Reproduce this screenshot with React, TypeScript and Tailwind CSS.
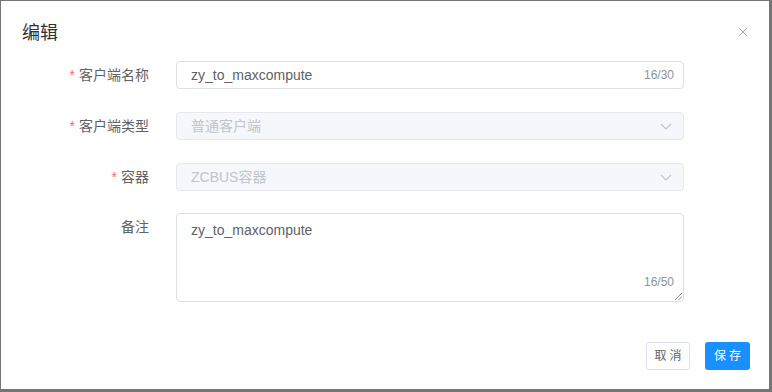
import { X } from "lucide-react";

const font = "font-['Liberation_Sans','Noto_Sans_CJK_SC',sans-serif]";

const Chevron = () => (
  <svg width="12" height="7" viewBox="0 0 12 7" className="text-[#c0c4cc]">
    <path d="M1 1l5 5 5-5" fill="none" stroke="currentColor" strokeWidth="1.1" />
  </svg>
);

const Label = ({ text, required }: { text: string; required?: boolean }) => (
  <div className="w-[148px] shrink-0 h-[28px] flex items-center justify-end text-[14px] text-[#606266]">
    {required && <span className="text-[#f56c6c] mr-[4px]">*</span>}
    {text}
  </div>
);

export default function App() {
  return (
    <div className={`w-[772px] h-[392px] bg-[#757575] pt-[1px] pl-[1px] overflow-hidden ${font}`}>
      <div className="w-[768px] h-[388px] bg-white flex flex-col">
        {/* Header */}
        <div className="h-[60px] pl-[21px] pr-[19px] pt-[20px] flex items-start justify-between">
          <h1 className="text-[18px] leading-[24px] text-[#303133]">编辑</h1>
          <button className="mt-[4px] text-[#909399]">
            <X size={14} strokeWidth={1.4} />
          </button>
        </div>

        {/* Form */}
        <div className="flex flex-col">
          <div className="flex items-center h-[28px]">
            <Label text="客户端名称" required />
            <div className="ml-[27px] w-[508px] h-[28px] border border-[#dcdfe6] rounded-[4px] flex items-center justify-between pl-[14px] pr-[9px]">
              <span className="text-[14px] text-[#606266]">zy_to_maxcompute</span>
              <span className="text-[12px] text-[#909399]">16/30</span>
            </div>
          </div>

          <div className="flex items-center h-[28px] mt-[23px]">
            <Label text="客户端类型" required />
            <div className="ml-[27px] w-[508px] h-[28px] border border-[#e4e7ed] bg-[#f5f7fa] rounded-[4px] flex items-center justify-between pl-[14px] pr-[11px]">
              <span className="text-[14px] text-[#c0c4cc]">普通客户端</span>
              <Chevron />
            </div>
          </div>

          <div className="flex items-center h-[28px] mt-[23px]">
            <Label text="容器" required />
            <div className="ml-[27px] w-[508px] h-[28px] border border-[#e4e7ed] bg-[#f5f7fa] rounded-[4px] flex items-center justify-between pl-[14px] pr-[11px]">
              <span className="text-[14px] text-[#c0c4cc]">ZCBUS容器</span>
              <Chevron />
            </div>
          </div>

          <div className="flex items-start mt-[22px]">
            <Label text="备注" />
            <div className="relative ml-[27px] w-[508px] h-[89px] border border-[#dcdfe6] rounded-[4px] pl-[14px] pt-[4px]">
              <span className="text-[14px] leading-[20px] text-[#606266]">zy_to_maxcompute</span>
              <span className="absolute right-[9px] bottom-[11px] text-[12px] leading-[16px] text-[#909399]">16/50</span>
              <svg width="8" height="8" viewBox="0 0 8 8" className="absolute right-[1px] bottom-[1px] text-[#8a8a8a]">
                <path d="M1 8L8 1M4.5 8L8 4.5" stroke="currentColor" strokeWidth="1" />
              </svg>
            </div>
          </div>
        </div>

        {/* Footer */}
        <div className="mt-auto mb-[19px] pr-[19px] flex justify-end gap-[15px]">
          <button className="w-[44px] h-[28px] border border-[#dcdfe6] rounded-[3px] text-[12px] text-[#606266] tracking-[3px] pl-[3px]">
            取消
          </button>
          <button className="w-[45px] h-[28px] bg-[#1890ff] rounded-[3px] text-[12px] text-white tracking-[3px] pl-[3px]">
            保存
          </button>
        </div>
      </div>
    </div>
  );
}
